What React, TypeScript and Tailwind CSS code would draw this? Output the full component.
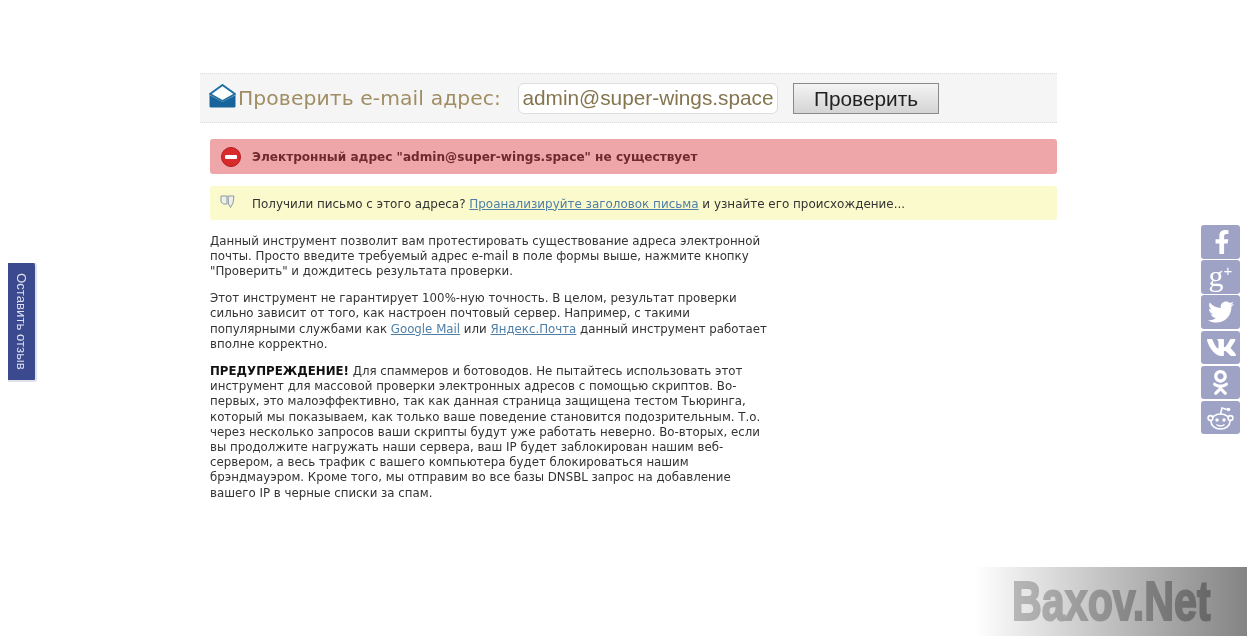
import { FaFacebookF, FaTwitter, FaVk, FaOdnoklassniki } from 'react-icons/fa'

const verdana = "font-['DejaVu_Sans','Liberation_Sans',sans-serif]"

function ShareButton({ children }: { children: React.ReactNode }) {
  return (
    <div className="w-[39px] h-[33.5px] rounded-[3px] bg-[#9ea3c6] text-white flex items-center justify-center">
      {children}
    </div>
  )
}

export default function App() {
  return (
    <div className={`relative w-[1247px] h-[636px] overflow-hidden bg-white blur-[0.4px] ${verdana}`}>
      <div className="w-[857px] ml-[200px] pt-[73px]">
        {/* Check form */}
        <div className="h-[50px] bg-[#f5f5f5] border-y border-dotted border-[#dcdcdc] flex items-center pl-[9px]">
          <svg width="27" height="24" viewBox="0 0 27 24" className="shrink-0 -mt-[4px]">
            <path d="M13.5 1 L1 10 L13.5 17 L26 10 Z" fill="#fff" stroke="#1f6ea3" strokeWidth="2" strokeLinejoin="round" />
            <path d="M0.5 11 L13.5 18 L26.5 11 V22 a1.5 1.5 0 0 1 -1.5 1.5 H2 a1.5 1.5 0 0 1 -1.5 -1.5 Z" fill="#16649b" />
          </svg>
          <span className="ml-[2px] mt-[1px] text-[20.3px] tracking-[0.1px] text-[#a08d63] whitespace-nowrap">Проверить e-mail адрес:</span>
          <div className="ml-[17px] w-[260px] h-[31px] rounded-[6px] border border-[#dddddd] bg-white flex items-center justify-center font-['Liberation_Sans',sans-serif] text-[20.8px] text-[#85754f] whitespace-nowrap">
            admin@super-wings.space
          </div>
          <button className="ml-[15px] w-[146px] h-[31px] border border-[#8a8a8a] bg-gradient-to-b from-[#f4f4f4] to-[#d4d4d4] font-['Liberation_Sans',sans-serif] text-[20.8px] leading-[27px] text-[#222222]">
            Проверить
          </button>
        </div>

        {/* Alerts */}
        <div className="ml-[10px] mt-[16px] h-[35px] rounded-[3px] bg-[#eea6a8] flex items-center pl-[11px]">
          <div className="w-[20px] h-[20px] rounded-full bg-[#d92a2c] border border-[#b01c1e] flex items-center justify-center shrink-0">
            <div className="w-[12px] h-[4px] rounded-[1px] bg-white" />
          </div>
          <span className="ml-[11px] mt-[2px] text-[12.1px] font-bold text-[#6e2a2c] whitespace-nowrap">
            Электронный адрес "admin@super-wings.space" не существует
          </span>
        </div>
        <div className="ml-[10px] mt-[12px] h-[34px] rounded-[3px] bg-[#fafacc] flex items-center pl-[10px]">
          <svg width="15" height="15" viewBox="0 0 15 15" className="shrink-0 -mt-[3px]" fill="#eef0ee" stroke="#8f9a9c" strokeWidth="1">
            <path d="M1 2 H7 V10 H3.5 L1 8 Z" />
            <path d="M8 2 H14 L13 9 L10.5 13.5 L8.5 10 Z" />
          </svg>
          <span className="ml-[17px] mt-[3px] text-[11.95px] text-[#333333] whitespace-nowrap">
            Получили письмо с этого адреса? <a className="text-[#4f7fa6] underline">Проанализируйте заголовок письма</a> и узнайте его происхождение...
          </span>
        </div>

        {/* Description */}
        <div className="ml-[10px] mt-[13.5px] w-[580px] text-[11.8px] leading-[15.2px] text-[#333333] whitespace-nowrap">
          <p>
            Данный инструмент позволит вам протестировать существование адреса электронной<br />
            почты. Просто введите требуемый адрес e-mail в поле формы выше, нажмите кнопку<br />
            "Проверить" и дождитесь результата проверки.
          </p>
          <p className="mt-[12px]">
            Этот инструмент не гарантирует 100%-ную точность. В целом, результат проверки<br />
            сильно зависит от того, как настроен почтовый сервер. Например, с такими<br />
            популярными службами как <a className="text-[#4f7fa6] underline">Google Mail</a> или <a className="text-[#4f7fa6] underline">Яндекс.Почта</a> данный инструмент работает<br />
            вполне корректно.
          </p>
          <p className="mt-[12px]">
            <b className="text-[#111111]">ПРЕДУПРЕЖДЕНИЕ!</b> Для спаммеров и ботоводов. Не пытайтесь использовать этот<br />
            инструмент для массовой проверки электронных адресов с помощью скриптов. Во-<br />
            первых, это малоэффективно, так как данная страница защищена тестом Тьюринга,<br />
            который мы показываем, как только ваше поведение становится подозрительным. Т.о.<br />
            через несколько запросов ваши скрипты будут уже работать неверно. Во-вторых, если<br />
            вы продолжите нагружать наши сервера, ваш IP будет заблокирован нашим веб-<br />
            сервером, а весь трафик с вашего компьютера будет блокироваться нашим<br />
            брэндмауэром. Кроме того, мы отправим во все базы DNSBL запрос на добавление<br />
            вашего IP в черные списки за спам.
          </p>
        </div>
      </div>

      {/* Feedback tab */}
      <div className="absolute left-[8px] top-[263px] w-[29px] h-[119px] rounded-r-[3px] bg-[#3b4a8e] border-r-2 border-b-2 border-[#dfe1ea] flex items-center justify-center">
        <span className="[writing-mode:vertical-rl] font-['Liberation_Sans',sans-serif] text-[13.2px] text-[#dfe1f0] whitespace-nowrap">Оставить отзыв</span>
      </div>

      {/* Share buttons */}
      <div className="absolute left-[1201px] top-[225px] flex flex-col gap-[1.7px]">
        <ShareButton><FaFacebookF size={24} className="ml-[3px]" /></ShareButton>
        <ShareButton>
          <span className="font-['Liberation_Serif',serif] text-[30px] leading-[30px] -mt-[2px]">g</span>
          <span className="font-['Liberation_Sans',sans-serif] text-[15px] leading-[15px] -mt-[12px]">+</span>
        </ShareButton>
        <ShareButton><FaTwitter size={26} /></ShareButton>
        <ShareButton><FaVk size={31} className="ml-[2px]" /></ShareButton>
        <ShareButton><FaOdnoklassniki size={25} /></ShareButton>
        <ShareButton>
          <svg width="27" height="26" viewBox="0 0 27 26" fill="none" stroke="white" strokeWidth="1.6">
            <ellipse cx="13.5" cy="16.5" rx="9.5" ry="7.5" />
            <circle cx="3.5" cy="13" r="2.4" fill="#9ea3c6" />
            <circle cx="23.5" cy="13" r="2.4" fill="#9ea3c6" />
            <path d="M13.5 9 L15 3 L20 4.5" />
            <circle cx="21.5" cy="4.5" r="1.8" fill="white" stroke="none" />
            <circle cx="10" cy="15" r="1.7" fill="white" stroke="none" />
            <circle cx="17" cy="15" r="1.7" fill="white" stroke="none" />
            <path d="M9.5 19.5 Q13.5 22.5 17.5 19.5" strokeWidth="1.3" />
          </svg>
        </ShareButton>
      </div>

      {/* Watermark */}
      <div className="absolute left-[975px] top-[567px] w-[272px] h-[69px] bg-gradient-to-r from-white to-[#848484] flex items-center">
        <span className="ml-[37px] origin-left scale-x-[0.75] font-['Liberation_Sans',sans-serif] font-bold text-[55px] leading-none bg-gradient-to-r from-[#b8b8b8] to-[#666666] bg-clip-text [-webkit-text-fill-color:transparent] [-webkit-text-stroke:2px_transparent] whitespace-nowrap">
          Baxov.Net
        </span>
      </div>
    </div>
  )
}
